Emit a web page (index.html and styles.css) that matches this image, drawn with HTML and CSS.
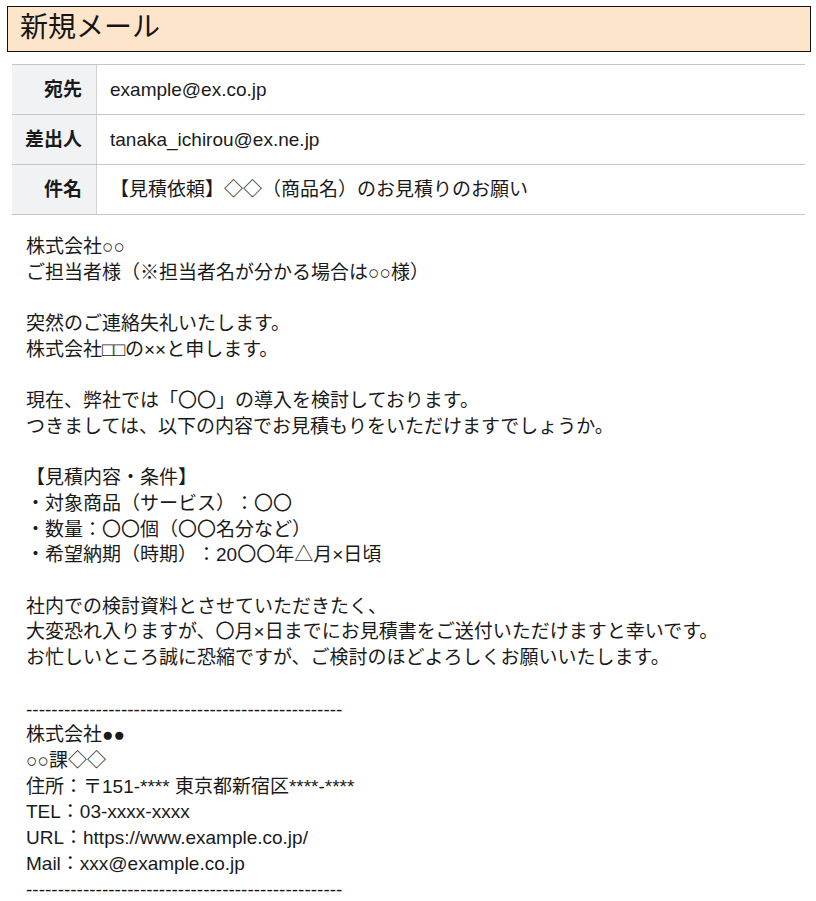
FILE: index.html
```html
<!DOCTYPE html>
<html lang="ja">
<head>
<meta charset="utf-8">
<title>新規メール</title>
<link rel="stylesheet" href="styles.css">
</head>
<body>
<div class="mail-title">新規メール</div>
<div class="headers">
  <div class="row"><div class="label">宛先</div><div class="value">example@ex.co.jp</div></div>
  <div class="row"><div class="label">差出人</div><div class="value">tanaka_ichirou@ex.ne.jp</div></div>
  <div class="row"><div class="label">件名</div><div class="value">【見積依頼】◇◇（商品名）のお見積りのお願い</div></div>
</div>
<div class="body">
<p>株式会社○○<br>ご担当者様（※担当者名が分かる場合は○○様）</p>
<p>突然のご連絡失礼いたします。<br>株式会社□□の××と申します。</p>
<p>現在、弊社では「〇〇」の導入を検討しております。<br>つきましては、以下の内容でお見積もりをいただけますでしょうか。</p>
<p>【見積内容・条件】<br>・対象商品（サービス）：〇〇<br>・数量：〇〇個（〇〇名分など）<br>・希望納期（時期）：20〇〇年△月×日頃</p>
<p>社内での検討資料とさせていただきたく、<br>大変恐れ入りますが、〇月×日までにお見積書をご送付いただけますと幸いです。<br>お忙しいところ誠に恐縮ですが、ご検討のほどよろしくお願いいたします。</p>
<p>--------------------------------------------------<br>株式会社●●<br>○○課◇◇<br>住所：〒151-**** 東京都新宿区****-****<br>TEL：03-xxxx-xxxx<br>URL：https://www.example.co.jp/<br>Mail：xxx@example.co.jp<br>--------------------------------------------------</p>
</div>
</body>
</html>
```
FILE: styles.css
```css
html, body {
  margin: 0;
  padding: 0;
  background: #ffffff;
}
body {
  font-family: "Liberation Sans", "Noto Sans CJK JP", sans-serif;
  color: #1a1a1a;
  font-size: 19px;
  text-spacing-trim: space-all;
}
.mail-title {
  margin: 6px 5px 0 7px;
  height: 44px;
  border: 1px solid #111111;
  background: #fde5cc;
  padding-left: 12px;
  font-size: 28px;
  line-height: 42px;
  color: #151515;
}
.headers {
  margin: 12px 11px 0 12px;
  border-top: 1px solid #c6c6c6;
}
.row {
  display: flex;
  height: 49px;
  border-bottom: 1px solid #c6c6c6;
}
.label {
  width: 70px;
  flex: none;
  padding-right: 14px;
  background: #f1f2f4;
  border-right: 1px solid #d2d2d2;
  font-weight: bold;
  text-align: right;
  line-height: 49px;
}
.value {
  padding-left: 13px;
  line-height: 49px;
}
.body {
  padding: 19px 0 0 26px;
  line-height: 25.7px;
}
.body p {
  margin: 0 0 25.7px 0;
}
```
